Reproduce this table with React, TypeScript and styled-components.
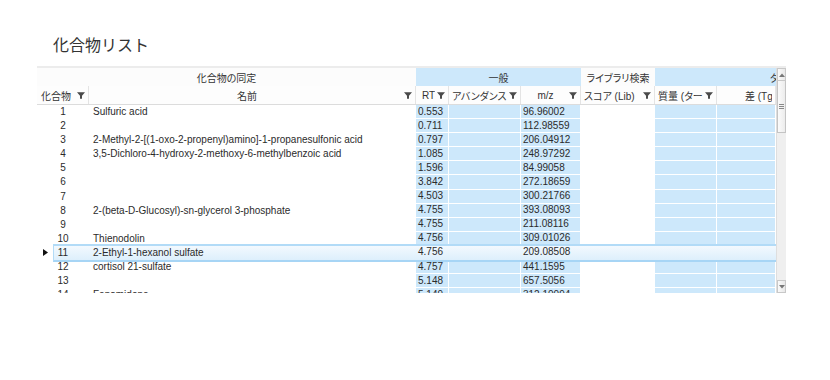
import React from 'react';
import styled, { createGlobalStyle, css } from 'styled-components';

const GlobalStyle = createGlobalStyle`
  html, body {
    margin: 0;
    padding: 0;
    background: #fff;
  }
  body {
    font-family: "Liberation Sans", "Noto Sans CJK JP", sans-serif;
    color: #2b2b2b;
  }
`;

type Tone = 'blue' | 'plain';
type Align = 'left' | 'center';

const BLUE = '#cde8fb';

const W = { rh: 16, no: 36, name: 327, rt: 33, ab: 72, mz: 60, score: 74, mass: 62, diff: 59 };

interface Row {
  no: number;
  name: string;
  rt: string;
  mz: string;
  selected?: boolean;
}

const rows: Row[] = [
  { no: 1, name: 'Sulfuric acid', rt: '0.553', mz: '96.96002' },
  { no: 2, name: '', rt: '0.711', mz: '112.98559' },
  { no: 3, name: '2-Methyl-2-[(1-oxo-2-propenyl)amino]-1-propanesulfonic acid', rt: '0.797', mz: '206.04912' },
  { no: 4, name: '3,5-Dichloro-4-hydroxy-2-methoxy-6-methylbenzoic acid', rt: '1.085', mz: '248.97292' },
  { no: 5, name: '', rt: '1.596', mz: '84.99058' },
  { no: 6, name: '', rt: '3.842', mz: '272.18659' },
  { no: 7, name: '', rt: '4.503', mz: '300.21766' },
  { no: 8, name: '2-(beta-D-Glucosyl)-sn-glycerol 3-phosphate', rt: '4.755', mz: '393.08093' },
  { no: 9, name: '', rt: '4.755', mz: '211.08116' },
  { no: 10, name: 'Thienodolin', rt: '4.756', mz: '309.01026' },
  { no: 11, name: '2-Ethyl-1-hexanol sulfate', rt: '4.756', mz: '209.08508', selected: true },
  { no: 12, name: 'cortisol 21-sulfate', rt: '4.757', mz: '441.1595' },
  { no: 13, name: '', rt: '5.148', mz: '657.5056' },
  { no: 14, name: 'Fenamidone', rt: '5.149', mz: '312.10094' },
];

const Page = styled.div`
  width: 830px;
  height: 380px;
  padding-top: 34px;
  box-sizing: border-box;
`;

const Title = styled.h1`
  margin: 0 0 12px 53px;
  font-family: "Noto Sans CJK JP", sans-serif;
  font-weight: 400;
  font-size: 16px;
  line-height: 20px;
  color: #333;
`;

const Grid = styled.div`
  margin-left: 37px;
  width: 749px;
  height: 227px;
  border-top: 2px solid #ececec;
  box-sizing: border-box;
  display: flex;
  overflow: hidden;
`;

const Main = styled.div`
  width: 739px;
  flex-shrink: 0;
  overflow: hidden;
  display: flex;
  flex-direction: column;
  font-size: 10px;
`;

const BandRow = styled.div`
  display: flex;
  height: 18px;
  flex-shrink: 0;
`;

const Band = styled.div<{ $w: number; $tone: Tone; $indent?: number }>`
  width: ${p => p.$w}px;
  flex-shrink: 0;
  box-sizing: border-box;
  background: ${p => (p.$tone === 'blue' ? BLUE : '#fcfcfc')};
  display: flex;
  align-items: center;
  justify-content: ${p => (p.$indent !== undefined ? 'flex-start' : 'center')};
  padding-left: ${p => p.$indent ?? 0}px;
  white-space: nowrap;
  overflow: hidden;
  font-feature-settings: "palt";
  color: #333;
`;

const HeaderRow = styled.div`
  display: flex;
  height: 19px;
  flex-shrink: 0;
  border-bottom: 1px solid #dcdcdc;
  box-sizing: border-box;
  background: #fdfdfd;
`;

const HeaderCell = styled.div<{ $w: number }>`
  width: ${p => p.$w}px;
  flex-shrink: 0;
  box-sizing: border-box;
  display: flex;
  align-items: center;
  padding: 0 3px 0 3px;
  border-right: 1px solid #e4e4e4;
  overflow: hidden;
  color: #333;
`;

const HeaderLabel = styled.span<{ $align: Align; $pad?: number }>`
  flex: 1;
  min-width: 0;
  text-align: ${p => p.$align};
  padding-left: ${p => p.$pad ?? 0}px;
  white-space: nowrap;
  overflow: hidden;
  font-feature-settings: "palt";
`;

const FilterIcon = styled.svg`
  flex-shrink: 0;
  margin-left: 2px;
  width: 8px;
  height: 7px;
`;

const Body = styled.div`
  display: flex;
  flex-direction: column;
`;

const DataRow = styled.div<{ $selected?: boolean }>`
  display: flex;
  height: 14.1px;
  flex-shrink: 0;
  position: relative;
  ${p =>
    p.$selected &&
    css`
      &::before {
        content: '';
        position: absolute;
        left: ${W.rh}px;
        right: 0;
        top: -2px;
        bottom: -2px;
        border-top: 2px solid #b2dbf7;
        border-bottom: 2px solid #a7d5f5;
        border-left: 1px solid #b2dbf7;
        background: linear-gradient(#f3f9fe, #ddeffc);
        z-index: 2;
      }
      & > div {
        position: relative;
        z-index: 3;
        background: transparent;
        border-color: transparent;
      }
    `}
`;

const Cell = styled.div<{ $w: number; $tone: Tone; $align?: Align }>`
  width: ${p => p.$w}px;
  flex-shrink: 0;
  box-sizing: border-box;
  display: flex;
  align-items: center;
  justify-content: ${p => (p.$align === 'center' ? 'center' : 'flex-start')};
  white-space: nowrap;
  overflow: hidden;
  line-height: 12px;
  ${p =>
    p.$tone === 'blue'
      ? css`
          background: ${BLUE};
          border-right: 1px solid #fff;
          border-bottom: 1px solid #fff;
          padding-left: 2px;
        `
      : css`
          padding-left: 4px;
        `}
`;

const NoCell = styled.div`
  width: ${W.no}px;
  flex-shrink: 0;
  box-sizing: border-box;
  padding-right: 16px;
  text-align: center;
  line-height: 14px;
`;

const Indicator = styled.div`
  width: ${W.rh}px;
  flex-shrink: 0;
  display: flex;
  align-items: center;
  padding-left: 6px;
  box-sizing: border-box;
`;

const ScrollBar = styled.div`
  width: 10px;
  flex-shrink: 0;
  display: flex;
  flex-direction: column;
  background: #efefef;
  border-left: 1px solid #dedede;
  box-sizing: border-box;
`;

const ScrollButton = styled.div`
  height: 13px;
  flex-shrink: 0;
  display: flex;
  align-items: center;
  justify-content: center;
  background: linear-gradient(90deg, #fafafa, #e8e8e8);
  border: 1px solid #c8c8c8;
  box-sizing: border-box;
`;

const Thumb = styled.div`
  height: 52px;
  flex-shrink: 0;
  display: flex;
  align-items: center;
  justify-content: center;
  background: linear-gradient(90deg, #fbfbfb, #ececec);
  border: 1px solid #c4c4c4;
  border-top: none;
  box-sizing: border-box;
`;

const Track = styled.div`
  flex: 1;
`;

const Filter = () => (
  <FilterIcon viewBox="0 0 8 7">
    <path d="M0 0.3H8L5 3.8V6.8H3V3.8Z" fill="#4a4a4a" />
  </FilterIcon>
);

const Arrow = ({ dir }: { dir: 'up' | 'down' }) => (
  <svg width="6" height="4" viewBox="0 0 6 4">
    <path d={dir === 'up' ? 'M0 4L3 0.5L6 4Z' : 'M0 0L3 3.5L6 0Z'} fill="#777" />
  </svg>
);

const App: React.FC = () => {
  return (
    <Page>
      <GlobalStyle />
      <Title>化合物リスト</Title>
      <Grid>
        <Main>
          <BandRow>
            <Band $w={W.rh + W.no + W.name} $tone="plain">化合物の同定</Band>
            <Band $w={W.rt + W.ab + W.mz} $tone="blue">一般</Band>
            <Band $w={W.score} $tone="plain">ライブラリ検索</Band>
            <Band $w={W.mass + W.diff} $tone="blue" $indent={115}>ターゲット</Band>
          </BandRow>
          <HeaderRow>
            <HeaderCell $w={W.rh + W.no}>
              <HeaderLabel $align="left" $pad={1}>化合物</HeaderLabel>
              <Filter />
            </HeaderCell>
            <HeaderCell $w={W.name}>
              <HeaderLabel $align="center">名前</HeaderLabel>
              <Filter />
            </HeaderCell>
            <HeaderCell $w={W.rt}>
              <HeaderLabel $align="left" $pad={3}>RT</HeaderLabel>
              <Filter />
            </HeaderCell>
            <HeaderCell $w={W.ab}>
              <HeaderLabel $align="left">アバンダンス</HeaderLabel>
              <Filter />
            </HeaderCell>
            <HeaderCell $w={W.mz}>
              <HeaderLabel $align="center">m/z</HeaderLabel>
              <Filter />
            </HeaderCell>
            <HeaderCell $w={W.score}>
              <HeaderLabel $align="left">スコア (Lib)</HeaderLabel>
              <Filter />
            </HeaderCell>
            <HeaderCell $w={W.mass}>
              <HeaderLabel $align="left">質量 (ターゲット)</HeaderLabel>
              <Filter />
            </HeaderCell>
            <HeaderCell $w={W.diff}>
              <HeaderLabel $align="left" $pad={25}>差 (Tgt - Obs)</HeaderLabel>
            </HeaderCell>
          </HeaderRow>
          <Body>
            {rows.map(r => (
              <DataRow key={r.no} $selected={r.selected}>
                <Indicator>
                  {r.selected && (
                    <svg width="5" height="7" viewBox="0 0 5 7">
                      <path d="M0 0L5 3.5L0 7Z" fill="#111" />
                    </svg>
                  )}
                </Indicator>
                <NoCell>{r.no}</NoCell>
                <Cell $w={W.name} $tone="plain">{r.name}</Cell>
                <Cell $w={W.rt} $tone="blue">{r.rt}</Cell>
                <Cell $w={W.ab} $tone="blue" />
                <Cell $w={W.mz} $tone="blue">{r.mz}</Cell>
                <Cell $w={W.score} $tone="plain" />
                <Cell $w={W.mass} $tone="blue" />
                <Cell $w={W.diff} $tone="blue" />
              </DataRow>
            ))}
          </Body>
        </Main>
        <ScrollBar>
          <ScrollButton>
            <Arrow dir="up" />
          </ScrollButton>
          <Thumb>
            <svg width="5" height="5" viewBox="0 0 5 5">
              <path d="M0 0.5H5M0 2.5H5M0 4.5H5" stroke="#888" strokeWidth="1" />
            </svg>
          </Thumb>
          <Track />
          <ScrollButton>
            <Arrow dir="down" />
          </ScrollButton>
        </ScrollBar>
      </Grid>
    </Page>
  );
};

export default App;
